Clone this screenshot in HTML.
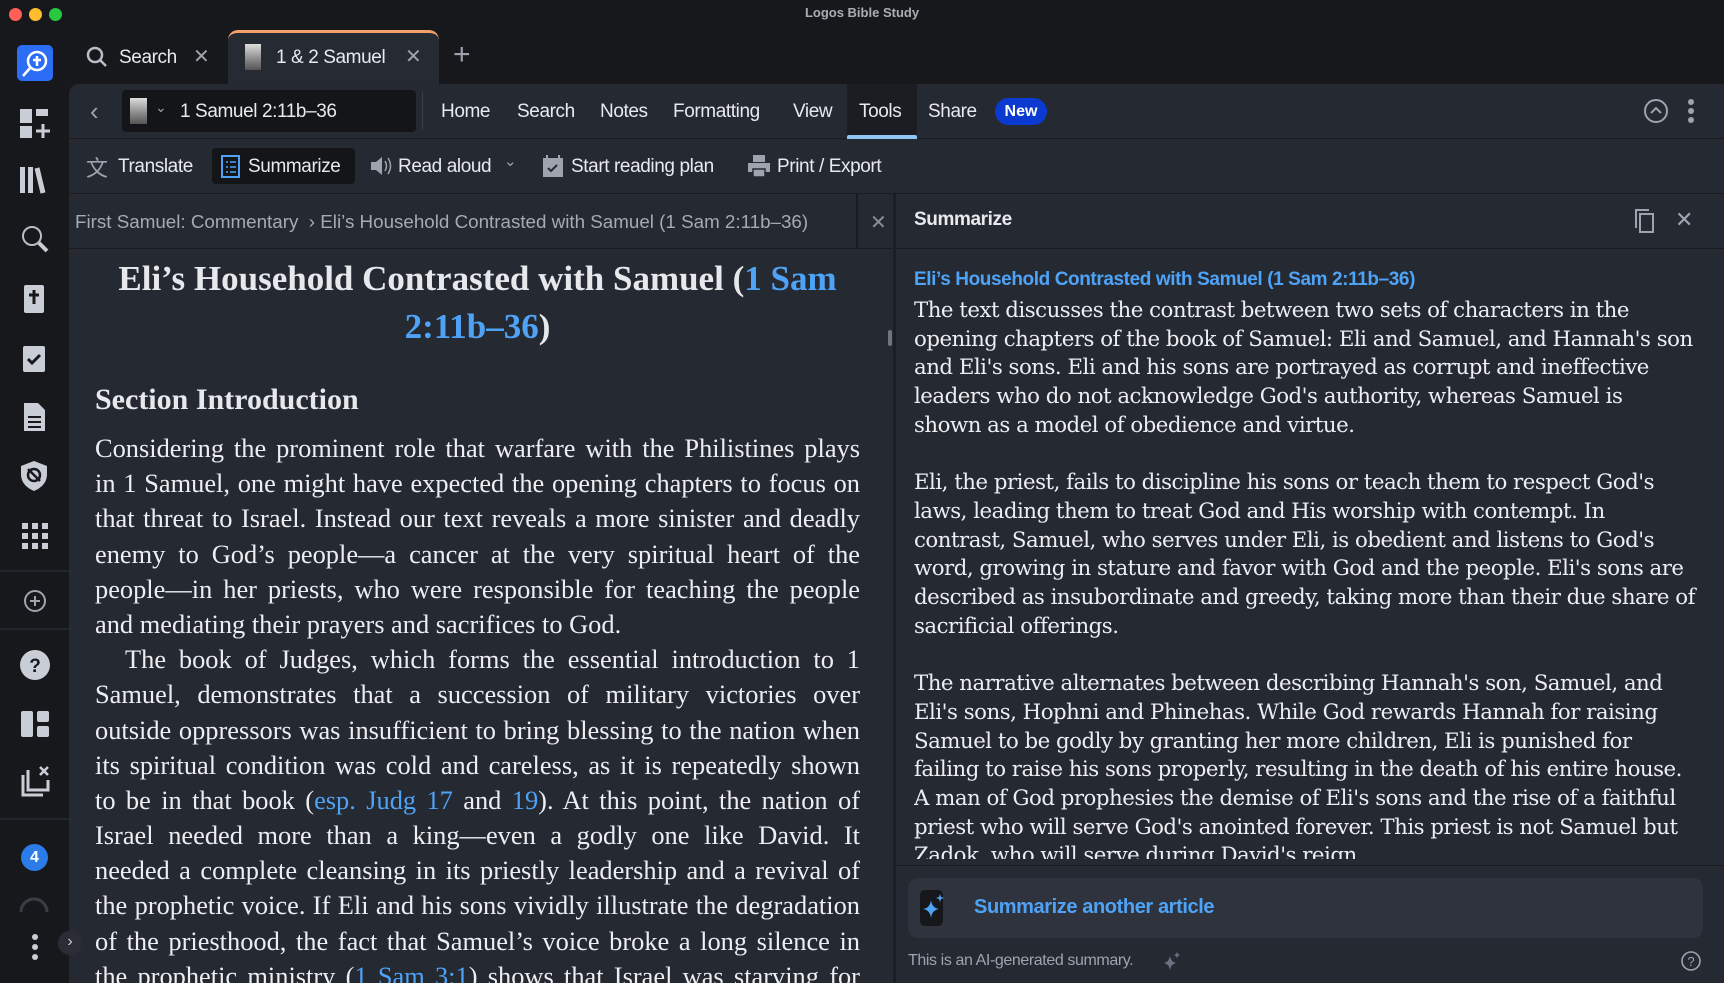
<!DOCTYPE html>
<html><head><meta charset="utf-8"><style>
*{margin:0;padding:0;box-sizing:border-box}
body{width:1724px;height:983px;background:#17181c;font-family:"Liberation Sans",sans-serif;color:#e6e8ec;position:relative;overflow:hidden}
.abs{position:absolute}
.dot{position:absolute;top:8px;width:13px;height:13px;border-radius:50%}
.side svg{position:absolute;left:17px}
.main{left:69px;top:84px;width:1655px;height:899px;background:#252932;border-radius:10px 0 0 0}
.row{border-bottom:1px solid #1a1c21}
.t{position:absolute;font-size:19px;letter-spacing:-0.4px;color:#e8eaee;white-space:nowrap}
.serif{font-family:"Liberation Serif",serif}
.lp .l{font-size:26.4px;line-height:35.2px;height:35.2px;text-align:justify;text-align-last:justify;color:#eceef1;overflow:hidden}
.lp .e{text-align-last:left}
.rp{font-family:"DejaVu Serif",serif;font-size:21.3px;line-height:28.7px;color:#eceef1;letter-spacing:-0.5px;white-space:nowrap}
a{color:#4fa3f7;text-decoration:none}
.ic{fill:none;stroke:#b8bdc7;stroke-width:2}
</style></head><body>
<div class="dot" style="left:9px;background:#fe5f57"></div>
<div class="dot" style="left:29px;background:#febc2e"></div>
<div class="dot" style="left:49px;background:#28c840"></div>
<div class="t" style="left:0;width:1724px;text-align:center;top:5px;font-size:13px;font-weight:bold;color:#a9adb5;letter-spacing:0">Logos Bible Study</div>

<div class="side">
<div class="abs" style="left:17px;top:45px;width:36px;height:36px;background:#2b6ef5;border-radius:5px"></div>
<svg class="abs" style="left:17px;top:45px" width="36" height="36"><circle cx="20" cy="16" r="9" fill="none" stroke="#fff" stroke-width="2.5"/><path d="M20 11v10M16 15h8M13 23l-7 8" stroke="#fff" stroke-width="2.5"/></svg>
<svg style="top:106px" width="36" height="36"><rect x="3" y="3" width="12" height="14" fill="#c9ced6"/><rect x="19" y="3" width="12" height="7" fill="#c9ced6"/><rect x="3" y="20" width="12" height="12" fill="#c9ced6"/><path d="M26 18v14M19 25h14" stroke="#c9ced6" stroke-width="3"/></svg>
<svg style="top:163px" width="36" height="36"><rect x="3" y="4" width="5" height="26" fill="#c9ced6"/><rect x="11" y="4" width="5" height="26" fill="#c9ced6"/><path d="M20 5l6 25" stroke="#c9ced6" stroke-width="5"/></svg>
<svg style="top:222px" width="36" height="36"><circle cx="15" cy="14" r="9" class="ic" stroke="#c9ced6" stroke-width="3.5"/><path d="M22 21l8 8" stroke="#c9ced6" stroke-width="4"/></svg>
<svg style="top:282px" width="36" height="36"><rect x="7" y="3" width="20" height="28" rx="2" fill="#c9ced6"/><path d="M17 8v14M12 13h10" stroke="#17181c" stroke-width="3"/></svg>
<svg style="top:341px" width="36" height="36"><rect x="6" y="5" width="22" height="26" rx="2" fill="#c9ced6"/><path d="M11 18l4 4 8-8" stroke="#17181c" stroke-width="3" fill="none"/></svg>
<svg style="top:400px" width="36" height="36"><path d="M7 3h14l7 7v21H7z" fill="#c9ced6"/><path d="M11 17h13M11 22h13M11 27h13" stroke="#17181c" stroke-width="2"/></svg>
<svg style="top:458px" width="36" height="36"><path d="M17 3l13 5v8c0 9-6 14-13 17C10 30 4 25 4 16V8z" fill="#c9ced6"/><circle cx="17" cy="17" r="6" fill="none" stroke="#17181c" stroke-width="2.5"/><path d="M11 11l12 12" stroke="#17181c" stroke-width="2.5"/></svg>
<svg style="top:518px" width="36" height="36"><g fill="#c9ced6"><rect x="5" y="5" width="6" height="6"/><rect x="15" y="5" width="6" height="6"/><rect x="25" y="5" width="6" height="6"/><rect x="5" y="15" width="6" height="6"/><rect x="15" y="15" width="6" height="6"/><rect x="25" y="15" width="6" height="6"/><rect x="5" y="25" width="6" height="6"/><rect x="15" y="25" width="6" height="6"/><rect x="25" y="25" width="6" height="6"/></g></svg>
<div class="abs" style="left:0;top:570px;width:69px;height:2px;background:#22252b"></div>
<svg style="top:583px" width="36" height="36"><circle cx="18" cy="18" r="10" fill="none" stroke="#9ea3ad" stroke-width="2"/><path d="M18 13v10M13 18h10" stroke="#9ea3ad" stroke-width="2"/></svg>
<div class="abs" style="left:0;top:628px;width:69px;height:2px;background:#22252b"></div>
<svg style="top:647px" width="36" height="36"><circle cx="18" cy="18" r="15" fill="#c9ced6"/><text x="18" y="25" text-anchor="middle" font-size="19" font-weight="bold" fill="#17181c" font-family="Liberation Sans">?</text></svg>
<svg style="top:706px" width="36" height="36"><rect x="4" y="5" width="12" height="26" rx="2" fill="#c9ced6"/><rect x="20" y="5" width="12" height="11" rx="2" fill="#c9ced6"/><rect x="20" y="20" width="12" height="11" rx="2" fill="#c9ced6"/></svg>
<svg style="top:763px" width="36" height="36"><path d="M6 12v20h20" fill="none" stroke="#c9ced6" stroke-width="3"/><path d="M11 7v20h20V17" fill="none" stroke="#c9ced6" stroke-width="3"/><path d="M23 4l8 8M31 4l-8 8" stroke="#c9ced6" stroke-width="2.5"/></svg>
<div class="abs" style="left:0;top:818px;width:69px;height:2px;background:#22252b"></div>
<div class="abs" style="left:21px;top:844px;width:27px;height:27px;border-radius:50%;background:#2b7be8;color:#fff;font-weight:bold;font-size:16px;text-align:center;line-height:27px">4</div>
<svg style="top:896px" width="36" height="20"><path d="M4 16a13 13 0 0 1 26 0" fill="none" stroke="#3a3d44" stroke-width="3"/></svg>
<svg style="top:932px" width="36" height="32"><circle cx="18" cy="5" r="3" fill="#c9ced6"/><circle cx="18" cy="15" r="3" fill="#c9ced6"/><circle cx="18" cy="25" r="3" fill="#c9ced6"/></svg>
</div>

<svg class="abs" style="left:85px;top:45px" width="24" height="24"><circle cx="10" cy="10" r="7" fill="none" stroke="#b8bdc7" stroke-width="2.5"/><path d="M15 15l6 6" stroke="#b8bdc7" stroke-width="2.5"/></svg>
<div class="t" style="left:119px;top:47px">Search</div>
<div class="t" style="left:193px;top:44px;color:#9ea3ad;font-size:20px">✕</div>
<div class="abs" style="left:228px;top:30px;width:211px;height:56px;background:#262a33;border-radius:10px 10px 0 0;border-top:3px solid #f4a06b"></div>
<div class="abs" style="left:245px;top:44px;width:16px;height:26px;background:linear-gradient(#ddd,#888 60%,#555)"></div>
<div class="t" style="left:276px;top:47px">1 &amp; 2 Samuel</div>
<div class="t" style="left:405px;top:44px;color:#9ea3ad;font-size:20px">✕</div>
<div class="t" style="left:453px;top:38px;color:#9ea3ad;font-size:30px;font-weight:300">+</div>

<div class="abs main"></div>
<div class="abs row" style="left:69px;top:84px;width:1655px;height:55px"></div>
<div class="t" style="left:90px;top:96px;color:#9ea3ad;font-size:26px">‹</div>
<div class="abs" style="left:122px;top:90px;width:294px;height:42px;background:#141518;border-radius:4px"></div>
<div class="abs" style="left:130px;top:98px;width:17px;height:26px;background:linear-gradient(#ddd,#888 60%,#555)"></div>
<div class="t" style="left:155px;top:99px;font-size:14px;color:#9ea3ad">⌄</div>
<div class="t" style="left:180px;top:101px">1 Samuel 2:11b–36</div>
<div class="abs" style="left:422px;top:92px;width:1px;height:38px;background:#3a3e47"></div>
<div class="t" style="left:441px;top:101px">Home</div>
<div class="t" style="left:517px;top:101px">Search</div>
<div class="t" style="left:600px;top:101px">Notes</div>
<div class="t" style="left:673px;top:101px">Formatting</div>
<div class="t" style="left:793px;top:101px">View</div>
<div class="abs" style="left:847px;top:84px;width:70px;height:55px;background:#1b1d22"></div>
<div class="abs" style="left:847px;top:135px;width:70px;height:4px;background:#8ec5f5;border-radius:2px 2px 0 0"></div>
<div class="t" style="left:859px;top:101px">Tools</div>
<div class="t" style="left:928px;top:101px">Share</div>
<div class="abs" style="left:995px;top:98px;width:52px;height:27px;background:#0a3ad0;border-radius:14px;color:#fff;font-size:16px;text-align:center;line-height:27px;font-weight:bold">New</div>
<svg class="abs" style="left:1642px;top:98px" width="28" height="26"><circle cx="14" cy="13" r="11" fill="none" stroke="#9ea3ad" stroke-width="2"/><path d="M9 15l5-5 5 5" fill="none" stroke="#9ea3ad" stroke-width="2"/></svg>
<svg class="abs" style="left:1683px;top:98px" width="16" height="28"><circle cx="8" cy="4" r="3" fill="#9ea3ad"/><circle cx="8" cy="13" r="3" fill="#9ea3ad"/><circle cx="8" cy="22" r="3" fill="#9ea3ad"/></svg>
<div class="abs row" style="left:69px;top:139px;width:1655px;height:55px"></div>
<div class="t" style="left:86px;top:151px;color:#9ea3ad;font-size:22px">文</div>
<div class="t" style="left:118px;top:156px">Translate</div>
<div class="abs" style="left:212px;top:148px;width:143px;height:36px;background:#141518;border-radius:4px"></div>
<svg class="abs" style="left:219px;top:152px" width="24" height="28"><rect x="3" y="4" width="17" height="21" fill="none" stroke="#4fa3f7" stroke-width="2"/><path d="M7 10h2M11 10h6M7 15h2M11 15h6M7 20h2M11 20h6" stroke="#4fa3f7" stroke-width="1.6"/></svg>
<div class="t" style="left:248px;top:156px">Summarize</div>
<svg class="abs" style="left:368px;top:154px" width="26" height="24"><path d="M3 8h5l6-5v18l-6-5H3z" fill="#9ea3ad"/><path d="M17 7q3 5 0 10M20 4q5 8 0 16" fill="none" stroke="#9ea3ad" stroke-width="1.5"/></svg>
<div class="t" style="left:398px;top:156px">Read aloud</div>
<div class="t" style="left:504px;top:152px;font-size:15px;color:#9ea3ad">⌄</div>
<svg class="abs" style="left:541px;top:153px" width="24" height="26"><rect x="2" y="5" width="20" height="19" fill="#9ea3ad"/><path d="M6 2v5M18 2v5" stroke="#9ea3ad" stroke-width="2"/><path d="M7 15l3 3 6-6" stroke="#252932" stroke-width="2" fill="none"/></svg>
<div class="t" style="left:571px;top:156px">Start reading plan</div>
<svg class="abs" style="left:746px;top:153px" width="26" height="26"><rect x="7" y="2" width="12" height="7" fill="#9ea3ad"/><rect x="2" y="10" width="22" height="9" fill="#9ea3ad"/><rect x="7" y="16" width="12" height="8" fill="#9ea3ad" stroke="#252932" stroke-width="1.5"/></svg>
<div class="t" style="left:777px;top:156px">Print / Export</div>

<div class="abs row" style="left:69px;top:194px;width:827px;height:55px"></div>
<div class="t" style="left:75px;top:211px;font-size:18.8px;letter-spacing:0;color:#a5aab3">First Samuel: Commentary &nbsp;› Eli’s Household Contrasted with Samuel (1 Sam 2:11b–36)</div>
<div class="abs" style="left:856px;top:194px;width:2px;height:55px;background:#1a1c21"></div>
<div class="t" style="left:870px;top:210px;font-size:20px;color:#8a8f99">✕</div>
<div class="abs" style="left:893px;top:194px;width:3px;height:789px;background:#1c1e23"></div>
<div class="abs" style="left:888px;top:330px;width:4px;height:16px;background:#70747c;border-radius:2px"></div>

<div class="abs lp serif" style="left:95px;top:255px;width:765px;height:728px;overflow:hidden">
<div style="text-align:center;font-weight:bold;font-size:35px;line-height:48px">Eli’s Household Contrasted with Samuel (<a>1 Sam<br>2:11b–36</a>)</div>
<div style="font-weight:bold;font-size:30px;margin-top:32px;margin-bottom:14px">Section Introduction</div>
<div class="l">Considering the prominent role that warfare with the Philistines plays</div>
<div class="l">in 1 Samuel, one might have expected the opening chapters to focus on</div>
<div class="l">that threat to Israel. Instead our text reveals a more sinister and deadly</div>
<div class="l">enemy to God’s people—a cancer at the very spiritual heart of the</div>
<div class="l">people—in her priests, who were responsible for teaching the people</div>
<div class="l e">and mediating their prayers and sacrifices to God.</div>
<div class="l" style="padding-left:30px">The book of Judges, which forms the essential introduction to 1</div>
<div class="l">Samuel, demonstrates that a succession of military victories over</div>
<div class="l">outside oppressors was insufficient to bring blessing to the nation when</div>
<div class="l">its spiritual condition was cold and careless, as it is repeatedly shown</div>
<div class="l">to be in that book (<a>esp. Judg 17</a> and <a>19</a>). At this point, the nation of</div>
<div class="l">Israel needed more than a king—even a godly one like David. It</div>
<div class="l">needed a complete cleansing in its priestly leadership and a revival of</div>
<div class="l">the prophetic voice. If Eli and his sons vividly illustrate the degradation</div>
<div class="l">of the priesthood, the fact that Samuel’s voice broke a long silence in</div>
<div class="l">the prophetic ministry (<a>1 Sam 3:1</a>) shows that Israel was starving for</div>
</div>
<div class="abs" style="left:58px;top:931px;width:24px;height:24px;border-radius:50%;background:#2a2d34;color:#c9ced6;text-align:center;line-height:22px;font-size:16px">›</div>

<div class="abs row" style="left:896px;top:194px;width:828px;height:55px"></div>
<div class="t" style="left:914px;top:209px;font-weight:bold;font-size:19px">Summarize</div>
<svg class="abs" style="left:1632px;top:207px" width="26" height="28"><rect x="8" y="7" width="13" height="18" fill="none" stroke="#9ea3ad" stroke-width="2"/><path d="M4 21V3h13" fill="none" stroke="#9ea3ad" stroke-width="2"/></svg>
<div class="t" style="left:1675px;top:207px;font-size:22px;color:#9ea3ad">✕</div>
<div class="t" style="left:914px;top:269px;font-size:19px;font-weight:bold;color:#4fa3f7">Eli’s Household Contrasted with Samuel (1 Sam 2:11b–36)</div>
<div class="abs rp" style="left:914px;top:297px;width:790px;height:562px;overflow:hidden">
The text discusses the contrast between two sets of characters in the<br>
opening chapters of the book of Samuel: Eli and Samuel, and Hannah's son<br>
and Eli's sons. Eli and his sons are portrayed as corrupt and ineffective<br>
leaders who do not acknowledge God's authority, whereas Samuel is<br>
shown as a model of obedience and virtue.<br><br>
Eli, the priest, fails to discipline his sons or teach them to respect God's<br>
laws, leading them to treat God and His worship with contempt. In<br>
contrast, Samuel, who serves under Eli, is obedient and listens to God's<br>
word, growing in stature and favor with God and the people. Eli's sons are<br>
described as insubordinate and greedy, taking more than their due share of<br>
sacrificial offerings.<br><br>
The narrative alternates between describing Hannah's son, Samuel, and<br>
Eli's sons, Hophni and Phinehas. While God rewards Hannah for raising<br>
Samuel to be godly by granting her more children, Eli is punished for<br>
failing to raise his sons properly, resulting in the death of his entire house.<br>
A man of God prophesies the demise of Eli's sons and the rise of a faithful<br>
priest who will serve God's anointed forever. This priest is not Samuel but<br>
Zadok, who will serve during David's reign.
</div>
<div class="abs" style="left:896px;top:865px;width:828px;height:1px;background:#1a1c21"></div>
<div class="abs" style="left:908px;top:878px;width:795px;height:60px;background:#2e333d;border-radius:10px"></div>
<div class="abs" style="left:920px;top:890px;width:23px;height:36px;background:#15171b;border-radius:5px"></div>
<svg class="abs" style="left:920px;top:890px" width="26" height="36"><path d="M11 10q1 8 8 9q-7 1-8 9q-1-8-8-9q7-1 8-9z" fill="#4fa3f7"/><path d="M20 4l1 3 3 1-3 1-1 3-1-3-3-1 3-1z" fill="#4fa3f7"/></svg>
<div class="t" style="left:974px;top:896px;font-size:20px;font-weight:bold;color:#4fa3f7">Summarize another article</div>
<div class="t" style="left:908px;top:952px;font-size:16px;color:#9ea3ad">This is an AI-generated summary.</div>
<svg class="abs" style="left:1162px;top:951px" width="20" height="20"><path d="M8 5q1 6 6 7q-5 1-6 7q-1-6-6-7q5-1 6-7z" fill="#6b7280"/><path d="M15 1l1 2 2 1-2 1-1 2-1-2-2-1 2-1z" fill="#6b7280"/></svg>
<svg class="abs" style="left:1680px;top:950px" width="22" height="22"><circle cx="11" cy="11" r="9" fill="none" stroke="#9ea3ad" stroke-width="1.6"/><text x="11" y="16" text-anchor="middle" font-size="13" fill="#9ea3ad" font-family="Liberation Sans">?</text></svg>
</body></html>
